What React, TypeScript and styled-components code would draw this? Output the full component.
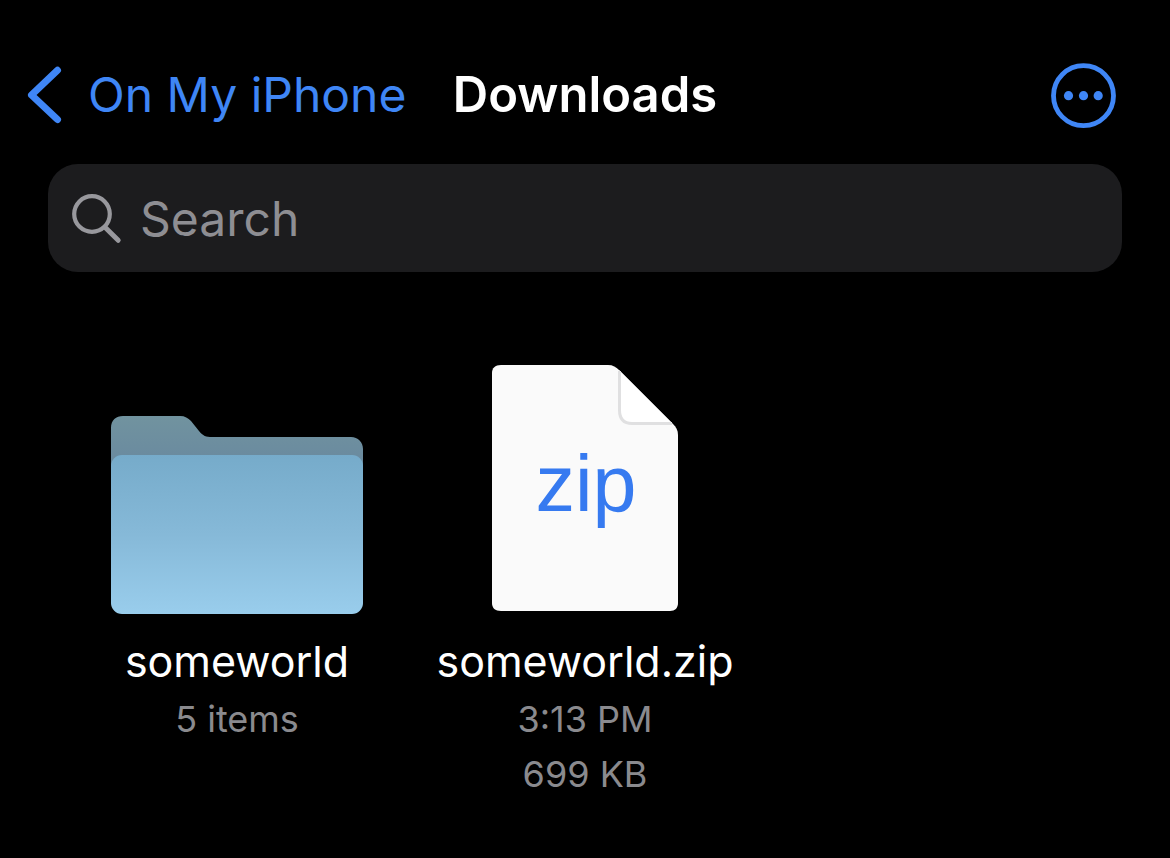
import React from "react";
import styled, { createGlobalStyle } from "styled-components";

const GlobalStyle = createGlobalStyle`
  * {
    box-sizing: border-box;
  }

  body {
    margin: 0;
    background: #000;
    color: #fff;
    font-family: Inter, "Liberation Sans", sans-serif;
  }
`;

const Screen = styled.div`
  padding: 63px 0 48px;
`;

const Header = styled.header`
  display: grid;
  grid-template-columns: 1fr auto 1fr;
  align-items: start;
  padding-bottom: 35px;
`;

const BackLink = styled.a`
  display: flex;
  align-items: center;
  gap: 25px;
  padding-left: 27px;
  color: #3f86f6;
  font-size: 48px;
  line-height: 64px;
  text-decoration: none;
  white-space: nowrap;
`;

const Title = styled.h1`
  margin: 0;
  font-size: 49px;
  font-weight: 600;
  line-height: 64px;
`;

const MoreButton = styled.button`
  display: flex;
  justify-self: end;
  margin: 0 54px 0 0;
  padding: 0;
  border: 0;
  background: none;
  color: #3f86f6;
  cursor: pointer;
`;

const SearchField = styled.label`
  display: flex;
  align-items: center;
  gap: 18px;
  height: 108px;
  margin: 0 48px;
  padding: 2px 24px 0;
  border-radius: 30px;
  background: #1c1c1e;
  color: #98989d;
`;

const SearchInput = styled.input`
  flex: 1;
  min-width: 0;
  padding: 0;
  border: 0;
  outline: 0;
  background: none;
  color: #fff;
  font: 48px/64px Inter, "Liberation Sans", sans-serif;

  &::placeholder {
    color: #8e8e93;
    opacity: 1;
  }
`;

const FileGrid = styled.ul`
  display: grid;
  grid-template-columns: repeat(3, 1fr);
  margin: 0;
  padding: 90px 63px 0;
  list-style: none;
`;

const FileButton = styled.button`
  display: flex;
  flex-direction: column;
  align-items: center;
  width: 100%;
  padding: 0;
  border: 0;
  background: none;
  color: inherit;
  font-family: inherit;
  cursor: pointer;
`;

const FileName = styled.span`
  margin-top: 17px;
  font-size: 43px;
  line-height: 61px;
`;

const FileMeta = styled.span`
  color: #8a8a8e;
  font-size: 36px;
  line-height: 55px;
`;

const ZipLabel = styled.text`
  fill: #367af0;
  font-family: "Liberation Sans", Arial, sans-serif;
  font-size: 79px;
`;

function ChevronIcon() {
  return (
    <svg width="36" height="58" viewBox="0 0 36 58" fill="none" aria-hidden="true">
      <path
        d="M30.500 4.300 4.500 29 30.500 53.500"
        stroke="currentColor"
        strokeWidth="7"
        strokeLinecap="round"
        strokeLinejoin="round"
      />
    </svg>
  );
}

function MoreIcon() {
  return (
    <svg width="65" height="66" viewBox="0 0 65 66" aria-hidden="true">
      <circle cx="32.5" cy="32.7" r="30" fill="none" stroke="currentColor" strokeWidth="4.8" />
      <circle cx="17.5" cy="32.7" r="4.6" fill="currentColor" />
      <circle cx="32.5" cy="32.7" r="4.6" fill="currentColor" />
      <circle cx="47.2" cy="32.7" r="4.6" fill="currentColor" />
    </svg>
  );
}

function SearchIcon() {
  return (
    <svg width="50" height="50" viewBox="0 0 50 50" fill="none" aria-hidden="true">
      <circle cx="20" cy="20" r="17.8" stroke="currentColor" strokeWidth="4.200" />
      <path d="M33 33.2 46.2 46.3" stroke="currentColor" strokeWidth="5" strokeLinecap="round" />
    </svg>
  );
}

function FolderIcon() {
  return (
    <svg width="252" height="252" viewBox="0 0 252 252" aria-hidden="true">
      <defs>
        <linearGradient id="folderBack" x1="0" y1="54" x2="0" y2="105" gradientUnits="userSpaceOnUse">
          <stop offset="0" stopColor="#71939f" />
          <stop offset="1" stopColor="#69899f" />
        </linearGradient>
        <linearGradient id="folderFront" x1="0" y1="93" x2="0" y2="252" gradientUnits="userSpaceOnUse">
          <stop offset="0" stopColor="#76abca" />
          <stop offset="0.5" stopColor="#86b9d8" />
          <stop offset="1" stopColor="#99cdec" />
        </linearGradient>
      </defs>
      <path
        d="M0 66C0 58 5 54 12 54H69C74 54 77 56 80 59L88 69C92 74 95 75 101 75H240C247 75 252 80 252 87V120H0Z"
        fill="url(#folderBack)"
      />
      <rect y="93" width="252" height="159" rx="11" fill="url(#folderFront)" />
    </svg>
  );
}

function ZipIcon() {
  return (
    <svg width="252" height="252" viewBox="0 0 252 252" aria-hidden="true">
      <path
        d="M42 3H149C154 3 157 5 160 8L214 62C217 65 219 68 219 73V241C219 246 216 249 211 249H42C36 249 33 246 33 241V11C33 6 36 3 42 3Z"
        fill="#fafafa"
      />
      <path d="M160 8V48C160 57 165 61.5 173 61.5H213.500Z" fill="#fff" />
      <path d="M160.500 9V48C160.500 57 165 61.500 173 61.500H213" fill="none" stroke="#e0e0e1" strokeWidth="3" />
      <ZipLabel x="127" y="149" textAnchor="middle">
        zip
      </ZipLabel>
    </svg>
  );
}

const files = [
  { name: "someworld", Icon: FolderIcon, details: ["5 items"] },
  { name: "someworld.zip", Icon: ZipIcon, details: ["3:13 PM", "699 KB"] },
];

export default function App() {
  return (
    <>
      <GlobalStyle />
      <Screen>
        <Header>
          <BackLink href="#on-my-iphone">
            <ChevronIcon />
            On My iPhone
          </BackLink>
          <Title>Downloads</Title>
          <MoreButton type="button" aria-label="More">
            <MoreIcon />
          </MoreButton>
        </Header>
        <SearchField>
          <SearchIcon />
          <SearchInput type="text" placeholder="Search" aria-label="Search" />
        </SearchField>
        <main>
          <FileGrid>
            {files.map(({ name, Icon, details }) => (
              <li key={name}>
                <FileButton type="button">
                  <Icon />
                  <FileName>{name}</FileName>
                  {details.map((detail) => (
                    <FileMeta key={detail}>{detail}</FileMeta>
                  ))}
                </FileButton>
              </li>
            ))}
          </FileGrid>
        </main>
      </Screen>
    </>
  );
}
